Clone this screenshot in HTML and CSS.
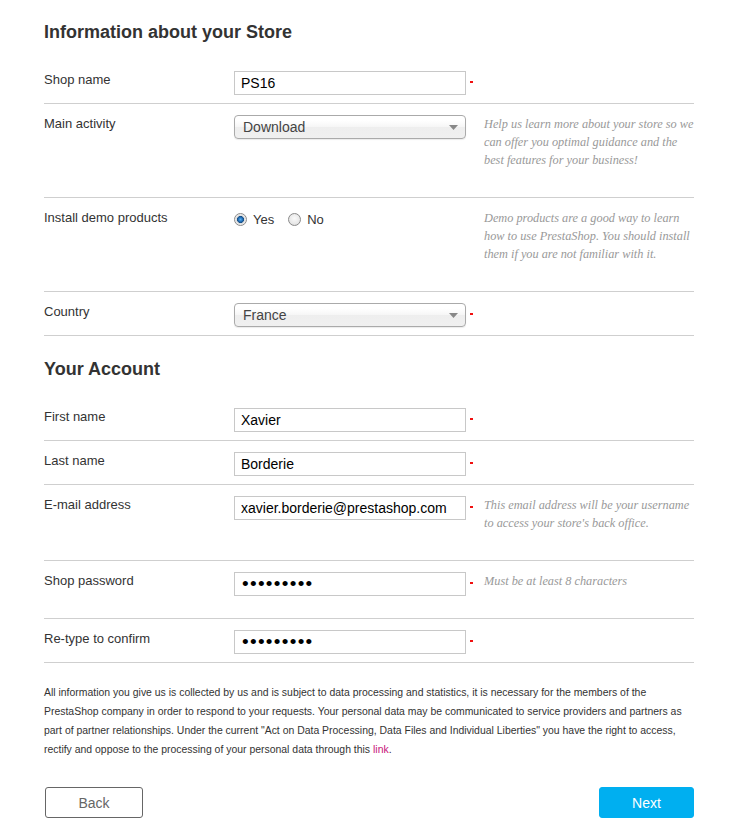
FILE: index.html
```html
<!DOCTYPE html>
<html lang="en">
<head>
<meta charset="utf-8">
<title>PrestaShop installation - Store information</title>
<link rel="stylesheet" href="styles.css">
</head>
<body>
<form class="page">
  <h2 class="section-title">Information about your Store</h2>

  <div class="field-row">
    <label class="field-label" for="shop-name">Shop name</label>
    <div class="field-control"><input class="text-input" id="shop-name" type="text" value="PS16"></div>
    <span class="required"></span>
  </div>

  <div class="field-row">
    <label class="field-label" for="activity">Main activity</label>
    <div class="field-control">
      <div class="select-box">
        <select class="select" id="activity"><option>Download</option></select>
        <svg class="select-arrow" width="9" height="5" viewBox="0 0 9 5"><path d="M0 0h9L4.5 5z" fill="#888"/></svg>
      </div>
    </div>
    <span class="required-none"></span>
    <p class="hint">Help us learn more about your store so we can offer you optimal guidance and the best features for your business!</p>
  </div>

  <div class="field-row">
    <span class="field-label">Install demo products</span>
    <div class="field-control">
      <div class="radio-group">
        <label class="radio-option"><input class="radio" type="radio" name="demo" checked>Yes</label>
        <label class="radio-option"><input class="radio" type="radio" name="demo">No</label>
      </div>
    </div>
    <span class="required-none"></span>
    <p class="hint">Demo products are a good way to learn how to use PrestaShop. You should install them if you are not familiar with it.</p>
  </div>

  <div class="field-row">
    <label class="field-label" for="country">Country</label>
    <div class="field-control">
      <div class="select-box">
        <select class="select" id="country"><option>France</option></select>
        <svg class="select-arrow" width="9" height="5" viewBox="0 0 9 5"><path d="M0 0h9L4.5 5z" fill="#888"/></svg>
      </div>
    </div>
    <span class="required"></span>
  </div>

  <h2 class="section-title section-title-next">Your Account</h2>

  <div class="field-row">
    <label class="field-label" for="first-name">First name</label>
    <div class="field-control"><input class="text-input" id="first-name" type="text" value="Xavier"></div>
    <span class="required"></span>
  </div>

  <div class="field-row">
    <label class="field-label" for="last-name">Last name</label>
    <div class="field-control"><input class="text-input" id="last-name" type="text" value="Borderie"></div>
    <span class="required"></span>
  </div>

  <div class="field-row">
    <label class="field-label" for="email">E-mail address</label>
    <div class="field-control"><input class="text-input" id="email" type="text" value="xavier.borderie@prestashop.com"></div>
    <span class="required"></span>
    <p class="hint">This email address will be your username to access your store's back office.</p>
  </div>

  <div class="field-row">
    <label class="field-label" for="password">Shop password</label>
    <div class="field-control"><input class="text-input password" id="password" type="password" value="123456789"></div>
    <span class="required"></span>
    <p class="hint">Must be at least 8 characters</p>
  </div>

  <div class="field-row">
    <label class="field-label" for="password-confirm">Re-type to confirm</label>
    <div class="field-control"><input class="text-input password" id="password-confirm" type="password" value="123456789"></div>
    <span class="required"></span>
  </div>

  <p class="legal">All information you give us is collected by us and is subject to data processing and statistics, it is necessary for the members of the PrestaShop company in order to respond to your requests. Your personal data may be communicated to service providers and partners as part of partner relationships. Under the current "Act on Data Processing, Data Files and Individual Liberties" you have the right to access, rectify and oppose to the processing of your personal data through this <a class="legal-link" href="#">link</a>.</p>

  <div class="actions">
    <button class="btn btn-back" type="button">Back</button>
    <button class="btn btn-next" type="button">Next</button>
  </div>
</form>
</body>
</html>
```

FILE: styles.css
```css
html, body {
  margin: 0;
  padding: 0;
  background: #fff;
}

body {
  font-family: "Liberation Sans", Arial, sans-serif;
  color: #333;
}

.page {
  width: 650px;
  margin: 0 0 0 44px;
  padding-top: 22px;
}

.section-title {
  margin: 0 0 18px;
  font-size: 18px;
  line-height: 20px;
  font-weight: bold;
  color: #333;
}

.section-title-next {
  margin-top: 23px;
}

.field-row {
  display: grid;
  grid-template-columns: 190px 232px 18px 210px;
  align-items: start;
  padding: 11px 0 8px;
  border-bottom: 1px solid #cfcfcf;
}

.field-label {
  font-size: 13px;
  line-height: 18px;
  color: #333;
}

.field-control {
  height: 24px;
}

.text-input {
  box-sizing: border-box;
  width: 232px;
  height: 24px;
  margin: 0;
  padding: 0 6px;
  border: 1px solid #c8c8c8;
  border-radius: 0;
  font-family: "Liberation Sans", Arial, sans-serif;
  font-size: 14px;
  color: #000;
  background: #fff;
  outline: none;
}

.text-input.password {
  font-size: 19px;
  letter-spacing: 1.3px;
  padding-left: 7px;
}

.required {
  display: block;
  width: 3px;
  height: 2px;
  margin: 10px 0 0 4px;
  background: #f01010;
}

.hint {
  margin: 0 0 20px;
  font-family: "Liberation Serif", Georgia, serif;
  font-style: italic;
  font-size: 12.3px;
  line-height: 18px;
  color: #999;
}

.select-box {
  position: relative;
  width: 232px;
  height: 24px;
}

.select {
  box-sizing: border-box;
  width: 232px;
  height: 24px;
  margin: 0;
  padding: 0 0 0 8px;
  border: 1px solid #aaa;
  border-radius: 4px;
  -webkit-appearance: none;
  appearance: none;
  background: linear-gradient(#fff 20%, #f6f6f6 50%, #eee 52%, #f0f0f0 100%);
  box-shadow: 0 1px 1px rgba(0, 0, 0, 0.08);
  font-family: "Liberation Sans", Arial, sans-serif;
  font-size: 14px;
  color: #444;
  outline: none;
}

.select-arrow {
  position: absolute;
  right: 8px;
  top: 10px;
  pointer-events: none;
}

.radio-group {
  display: flex;
  align-items: center;
  height: 20px;
  gap: 14px;
}

.radio-option {
  display: flex;
  align-items: center;
  gap: 6px;
  font-size: 13px;
  color: #333;
}

.radio {
  -webkit-appearance: none;
  appearance: none;
  box-sizing: border-box;
  width: 13px;
  height: 13px;
  margin: 0;
  border: 1px solid #8a8a8a;
  border-radius: 50%;
  background: radial-gradient(circle at 50% 40%, #fafafa 0, #e8e8e8 60%, #d0d0d0 100%);
}

.radio:checked {
  background: radial-gradient(circle at 50% 50%, #5ab4f2 0, #2a79c4 1.8px, #164f86 3.2px, #dcdcdc 3.8px, #f6f6f6 6px);
}

.legal {
  margin: 20px 0 0;
  font-size: 10.45px;
  line-height: 19px;
  color: #333;
}

.legal-link {
  color: #c8137a;
  text-decoration: none;
}

.actions {
  display: flex;
  justify-content: space-between;
  margin-top: 28px;
  padding-left: 1px;
}

.btn {
  box-sizing: border-box;
  height: 31px;
  border-radius: 3px;
  font-family: "Liberation Sans", Arial, sans-serif;
  font-size: 14px;
  cursor: pointer;
}

.btn-back {
  width: 98px;
  border: 1px solid #666;
  background: #fff;
  color: #666;
}

.btn-next {
  width: 95px;
  border: 1px solid #00aff0;
  background: #00aff0;
  color: #fff;
}
```
